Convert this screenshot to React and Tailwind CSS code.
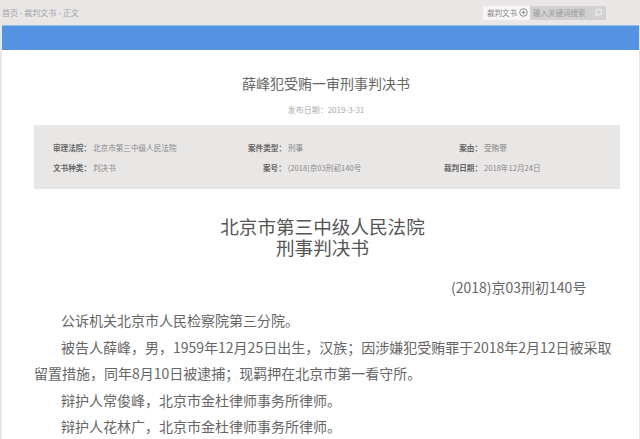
const cjk = { fontFamily: '"Noto Sans CJK SC", "Noto Sans", sans-serif' };

function Meta({ w, label, value, lw }) {
  return (
    <div className={`flex items-center ${w}`}>
      <span className={`${lw} text-right font-bold text-[#666]`}>{label}：</span>
      <span className="ml-[2px] text-[#888]">{value}</span>
    </div>
  );
}

export default function App() {
  return (
    <div className="w-[640px] h-[439px] overflow-hidden bg-[#e9e6e6]" style={cjk}>
      <header className="h-[25px] flex items-center justify-between pl-[2px] pr-[34px] text-[8px] text-[#a5a5a5]">
        <span>首页 - 裁判文书 - 正文</span>
        <div className="flex items-center h-[14px]">
          <div className="flex items-center justify-between h-full w-[47px] pl-[4px] pr-[2px] bg-[#f7f5f5] text-[#888] text-[7.5px]">
            <span className="whitespace-nowrap">裁判文书</span>
            <svg width="9" height="9" viewBox="0 0 9 9" className="shrink-0 text-[#777]" fill="none" stroke="currentColor" strokeWidth="0.8">
              <circle cx="4.5" cy="4.5" r="3.8" />
              <path d="M2.6 4.5h3.8M4.5 2.6v3.8" />
            </svg>
          </div>
          <div className="flex items-center justify-between h-full w-[76px] pl-[3px] pr-[3px] bg-[#d2d0d0] text-[#999] text-[7.5px]">
            <span className="whitespace-nowrap">输入关键词搜索</span>
            <svg width="10" height="10" viewBox="0 0 10 10" fill="none" stroke="#eee" strokeWidth="1.2">
              <circle cx="5.8" cy="4" r="2.8" />
              <path d="M3.8 6 1.5 8.5" />
            </svg>
          </div>
        </div>
      </header>
      <main className="ml-[2px] mr-px h-[414px] bg-white">
        <div className="h-[25px] bg-[#5393e2] border-t border-[#8fbdf0]" />
        <h1 className="mt-[22px] pl-[11px] text-center text-[14px] leading-[22px] text-[#666]">薛峰犯受贿一审刑事判决书</h1>
        <p className="mt-[10px] pl-[11px] text-center text-[8px] leading-[12px] text-[#aaa]">发布日期：2019-3-31</p>
        <section className="mt-[9px] ml-[32px] w-[586px] h-[64px] bg-[#e9e6e6] pl-[19px] flex flex-col justify-center gap-[9px] text-[7.6px] leading-[11px]">
          <div className="flex">
            <Meta w="w-[195px]" lw="" label="审理法院" value="北京市第三中级人民法院" />
            <Meta w="w-[176px]" lw="" label="案件类型" value="刑事" />
            <Meta w="" lw="w-[58px]" label="案由" value="受贿罪" />
          </div>
          <div className="flex">
            <Meta w="w-[195px]" lw="" label="文书种类" value="判决书" />
            <div className="w-[176px] flex items-center pl-[15px]">
              <span className="font-bold text-[#666]">案号：</span>
              <span className="ml-[2px] text-[#888]">(2018)京03刑初140号</span>
            </div>
            <Meta w="" lw="w-[58px]" label="裁判日期" value="2018年12月24日" />
          </div>
        </section>
        <div className="mt-[26px] pl-[4px] text-center text-[18.6px] leading-[21px] text-[#555]">
          <div>北京市第三中级人民法院</div>
          <div>刑事判决书</div>
        </div>
        <p className="mt-[20px] pl-[449px] text-[14px] leading-[20px] text-[#666]">(2018)京03刑初140号</p>
        <div className="mt-[10px] pl-[32px] pr-[24px] text-[14px] leading-[26.5px] text-[#666]">
          <p className="indent-[27px]">公诉机关北京市人民检察院第三分院。</p>
          <p className="indent-[27px]">被告人薛峰，男，1959年12月25日出生，汉族；因涉嫌犯受贿罪于2018年2月12日被采取留置措施，同年8月10日被逮捕；现羁押在北京市第一看守所。</p>
          <p className="indent-[27px]">辩护人常俊峰，北京市金杜律师事务所律师。</p>
          <p className="indent-[27px]">辩护人花林广，北京市金杜律师事务所律师。</p>
        </div>
      </main>
    </div>
  );
}
